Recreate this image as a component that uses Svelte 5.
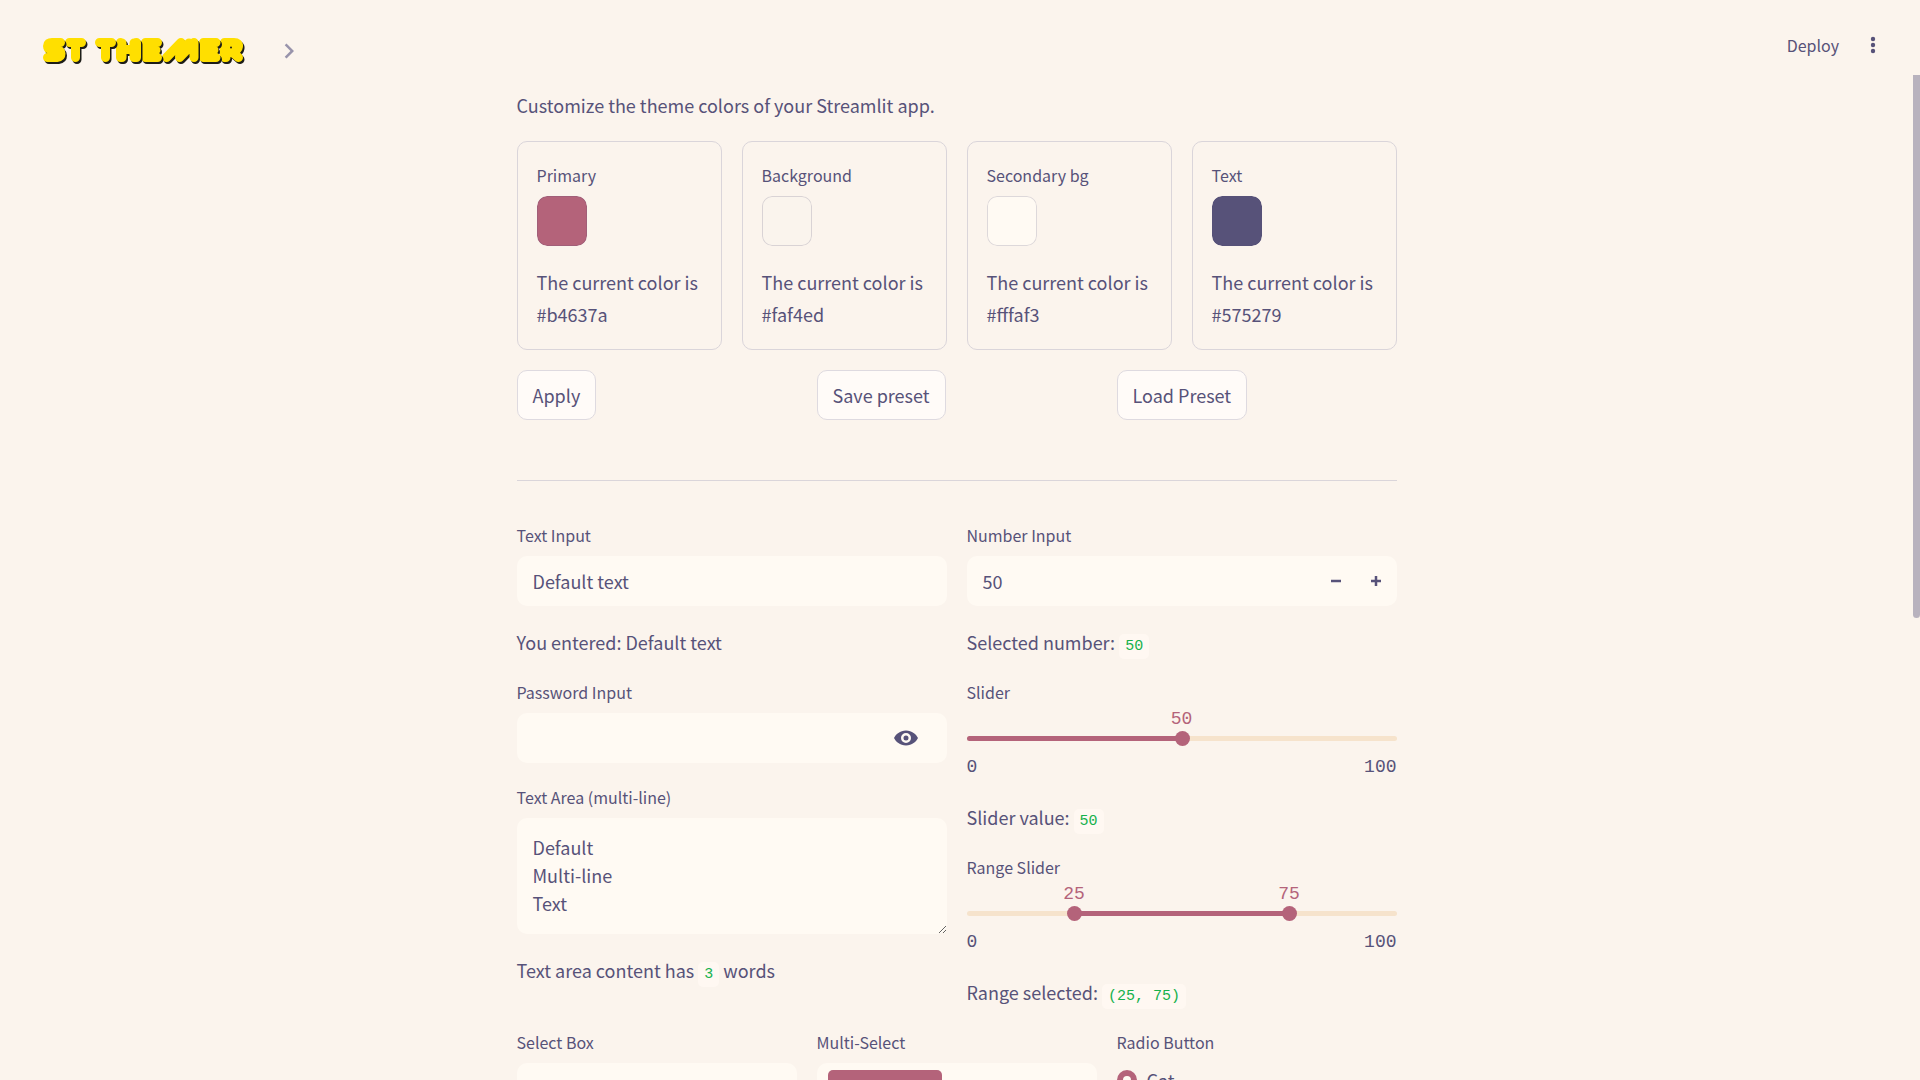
<script>
  const swatches = $state([
    { id: 'primary', label: 'Primary', value: '#b4637a' },
    { id: 'background', label: 'Background', value: '#faf4ed' },
    { id: 'secondary', label: 'Secondary bg', value: '#fffaf3' },
    { id: 'text', label: 'Text', value: '#575279' },
  ]);
  // Wordmark strokes, painted right to left so each shadow falls on the next letter.
  const wordmark = [
    'M185.500 24.500V9.500H195Q200 9.500 199.500 13.500T194 17.500H190.500M192 18L199.500 24.500M187 24.500V18',
    'M177 9.500H164.500V24.500H177M164.500 17H175M168 13H172M168 21H172',
    'M127.500 24.500L142 9.500L140.500 24.500L155 9.500V24.500M143 17L150 10',
    'M118.500 9.500H106.500V24.500H118.500M106.500 17H117M110 13H114M110 21H114',
    'M81.500 9.500V24.500M83 10V24.500M97.500 9.500V24.500M95 10V24.500M82 16.500H97',
    'M60.500 9.500H72.500M66.500 9.500V24.500',
    'M30.500 9.500H42.500M36.500 9.500V24.500',
    'M21.500 9.500H13Q8.500 9.500 8.500 13T13 17H18Q22 17 22 20.500T18 24.500H8.500',
  ];
  let text = $state('Default text');
  let number = $state(50);
  let password = $state('');
  let area = $state('Default\nMulti-line\nText');
  let slider = $state(50);
  let low = $state(25);
  let high = $state(75);
  let words = $derived(area.split(/\s+/).filter(Boolean).length);
</script>

<div class="app">
  <header>
    <div class="brand">
      <svg width="208" height="36" viewBox="0 0 208 36" role="img" aria-label="ST Themer" fill="none" stroke-width="9" stroke-linecap="round" stroke-linejoin="round">
        {#each wordmark as d}
          <path {d} stroke="#1d1d18" transform="translate(1.500 2)" />
          <path {d} stroke="#ffdf00" />
        {/each}
        <circle cx="192" cy="14.500" r="1" fill="#1d1d18" />
      </svg>
      <button class="icon expand" aria-label="Open sidebar">
        <svg width="30" height="30" viewBox="0 0 24 24"><path d="M10 6 8.590 7.410 13.170 12l-4.580 4.590L10 18l6-6z" fill="currentColor" /></svg>
      </button>
    </div>
    <div class="actions">
      <button class="deploy">Deploy</button>
      <button class="icon" aria-label="Main menu">
        <svg width="20" height="20" viewBox="0 0 20 20" fill="currentColor"><circle cx="10" cy="4" r="2.200" /><circle cx="10" cy="10" r="2.200" /><circle cx="10" cy="16" r="2.200" /></svg>
      </button>
    </div>
  </header>

  <div class="view">
    <main>
      <div class="block">
        <p>Customize the theme colors of your Streamlit app.</p>

        <div class="grid four">
          {#each swatches as s}
            <section class="card">
              <div class="field">
                <label for={s.id}>{s.label}</label>
                <input class="swatch" id={s.id} type="color" bind:value={s.value} />
              </div>
              <p>The current color is {s.value}</p>
            </section>
          {/each}
        </div>

        <div class="grid three">
          <div><button class="btn">Apply</button></div>
          <div><button class="btn">Save preset</button></div>
          <div><button class="btn">Load Preset</button></div>
        </div>

        <hr />

        <div class="grid two">
          <div class="stack">
            <div class="field">
              <label for="ti">Text Input</label>
              <div class="box"><input id="ti" type="text" bind:value={text} /></div>
            </div>
            <p>You entered: {text}</p>
            <div class="field">
              <label for="pw">Password Input</label>
              <div class="box">
                <input id="pw" type="password" bind:value={password} />
                <button class="icon eye" aria-label="Show password">
                  <svg width="24" height="24" viewBox="0 0 24 24"><path fill="currentColor" fill-rule="evenodd" d="M12 4.500C6 4.500 1.700 8.500 0 12c1.700 3.500 6 7.500 12 7.500S22.300 15.500 24 12C22.300 8.500 18 4.500 12 4.500zm0 2.500a5 5 0 1 1 0 10 5 5 0 0 1 0-10zm0 2.500a2.500 2.500 0 1 0 0 5 2.500 2.500 0 0 0 0-5z" /></svg>
                </button>
              </div>
            </div>
            <div class="field">
              <label for="ta">Text Area (multi-line)</label>
              <textarea id="ta" rows="3" bind:value={area}></textarea>
            </div>
            <p>Text area content has <code>{words}</code> words</p>
          </div>

          <div class="stack">
            <div class="field">
              <label for="ni">Number Input</label>
              <div class="box">
                <input id="ni" type="number" bind:value={number} />
                <button class="icon step" aria-label="Decrease" onclick={() => number--}>
                  <svg width="10" height="10" viewBox="0 0 10 10"><path d="M0 5H10" stroke="currentColor" stroke-width="2.500" /></svg>
                </button>
                <button class="icon step" aria-label="Increase" onclick={() => number++}>
                  <svg width="10" height="10" viewBox="0 0 10 10"><path d="M0 5H10M5 0V10" stroke="currentColor" stroke-width="2.500" /></svg>
                </button>
              </div>
            </div>
            <p>Selected number: <code>{number}</code></p>
            <div class="slider">
              <label for="sl">Slider</label>
              <div class="track">
                <div class="fill" style="left: 0; right: {100 - slider}%"></div>
                <output class="value" for="sl" style="left: {slider}%">{slider}</output>
                <input id="sl" type="range" min="0" max="100" bind:value={slider} />
              </div>
              <div class="ticks"><span>0</span><span>100</span></div>
            </div>
            <p>Slider value: <code>{slider}</code></p>
            <div class="slider">
              <label for="lo">Range Slider</label>
              <div class="track">
                <div class="fill" style="left: {low}%; right: {100 - high}%"></div>
                <output class="value" for="lo" style="left: {low}%">{low}</output>
                <output class="value" for="hi" style="left: {high}%">{high}</output>
                <input id="lo" type="range" min="0" max="100" bind:value={low} />
                <input id="hi" type="range" min="0" max="100" aria-label="Range end" bind:value={high} />
              </div>
              <div class="ticks"><span>0</span><span>100</span></div>
            </div>
            <p>Range selected: <code>({low}, {high})</code></p>
          </div>
        </div>

        <div class="grid three">
          <div class="field">
            <label for="sb">Select Box</label>
            <select class="box" id="sb"></select>
          </div>
          <div class="field">
            <label for="ms">Multi-Select</label>
            <div class="box multi">
              <button class="tag" aria-label="Remove option"></button>
              <input id="ms" type="text" />
            </div>
          </div>
          <fieldset class="field">
            <legend>Radio Button</legend>
            <label class="radio"><input type="radio" name="pet" checked />Cat</label>
          </fieldset>
        </div>
      </div>
    </main>
    <div class="scrollbar"><div class="thumb"></div></div>
  </div>
</div>

<style>
  :global(body) { margin: 0; background: #fbf4ed; }
  .app {
    --text: #575279;
    --primary: #b4637a;
    --line: #dad5da;
    --sans: "Noto Sans CJK JP", "Noto Sans", sans-serif;
    --mono: "Liberation Mono", monospace;
    height: 100vh;
    overflow: hidden;
    display: flex;
    flex-direction: column;
    background: #fbf4ed;
    color: var(--text);
    font: 18px/32px var(--sans);
  }
  .app * { box-sizing: border-box; }
  button, input, textarea, select { font: inherit; color: inherit; margin: 0; padding: 0; border: 0; background: none; outline: 0; }
  p { margin: 0; }
  header { height: 75px; flex: none; display: flex; justify-content: space-between; padding: 0 37px 0 39px; }
  .brand, .actions { display: flex; align-items: center; }
  .brand { gap: 27px; padding-top: 27px; }
  .actions { gap: 24px; padding-top: 15px; }
  .icon { display: flex; align-items: center; justify-content: center; }
  .expand { color: #9893ab; }
  .deploy, label, legend { font-size: 16px; }
  .view { flex: 1; min-height: 0; display: flex; }
  main { flex: 1; min-width: 0; overflow: hidden; }
  .scrollbar { width: 7px; flex: none; }
  .thumb { height: 54%; background: #b8b2be; border-radius: 0 0 4px 4px; }
  .block { max-width: 880px; margin: 0 auto; padding-top: 14px; display: flex; flex-direction: column; gap: 20px; }
  .grid { display: grid; gap: 20px; }
  .two { grid-template-columns: repeat(2, minmax(0, 1fr)); }
  .three { grid-template-columns: repeat(3, minmax(0, 1fr)); }
  .four { grid-template-columns: repeat(4, minmax(0, 1fr)); }
  .stack { display: flex; flex-direction: column; gap: 20px; }
  .card { border: 1px solid var(--line); border-radius: 10px; padding: 19px; display: flex; flex-direction: column; gap: 20px; }
  .field { display: flex; flex-direction: column; min-width: 0; border: 0; margin: 0; padding: 0; }
  label, legend { display: block; height: 30px; line-height: 28px; margin-bottom: 5px; padding: 0; }
  .swatch { width: 50px; height: 50px; border-radius: 10px; overflow: hidden; appearance: none; }
  .swatch::-webkit-color-swatch-wrapper { padding: 0; }
  .swatch::-webkit-color-swatch { border: 1px solid rgba(87, 82, 121, 0.2); border-radius: 10px; }
  .btn { height: 50px; padding: 0 15px; border: 1px solid #dedae0; border-radius: 10px; background: #fffbf8; display: block; }
  hr { width: 100%; height: 1px; border: 0; margin: 40px 0 20px; background: var(--line); }
  .box { height: 50px; width: 100%; display: flex; align-items: center; border-radius: 10px; background: #fffaf3; padding-right: 1px; }
  .box input { flex: 1; min-width: 0; width: 100%; height: 50px; padding: 0 16px; }
  select.box { appearance: none; }
  .eye { width: 80px; height: 50px; }
  .step { width: 40px; height: 50px; }
  input[type="number"] { appearance: textfield; }
  input[type="number"]::-webkit-inner-spin-button { appearance: none; }
  textarea { display: block; width: 100%; height: 116px; padding: 15px 16px; line-height: 28px; border-radius: 10px; background: #fffaf3; resize: vertical; overflow: hidden; }
  code { font-family: var(--mono); font-size: 15px; line-height: 1; color: #16b14c; background: #fff8f2; border-radius: 5px; padding: 4px 6px; }
  .slider { height: 103px; }
  .slider label { margin-bottom: 28px; }
  .track { position: relative; height: 5px; border-radius: 3px; background: #f6e3cc; }
  .fill { position: absolute; top: 0; bottom: 0; border-radius: 3px; background: var(--primary); }
  .value { position: absolute; bottom: 8px; transform: translateX(-50%); color: var(--primary); font: 18px/28px var(--mono); }
  .track input { position: absolute; left: -7px; top: -5px; width: calc(100% + 15px); height: 15px; appearance: none; pointer-events: none; }
  .track input::-webkit-slider-thumb { appearance: none; width: 15px; height: 15px; border-radius: 50%; background: var(--primary); pointer-events: auto; }
  .ticks { display: flex; justify-content: space-between; margin-top: 12px; font: 18px/28px var(--mono); }
  .multi { padding-left: 11px; }
  .tag { width: 114px; height: 36px; flex: none; border-radius: 5px; background: var(--primary); }
  .radio { display: flex; align-items: center; gap: 10px; height: 34px; font-size: 18px; }
  .radio input { appearance: none; width: 20px; height: 20px; border-radius: 50%; border: 6px solid var(--primary); background: #fffaf3; }
</style>
